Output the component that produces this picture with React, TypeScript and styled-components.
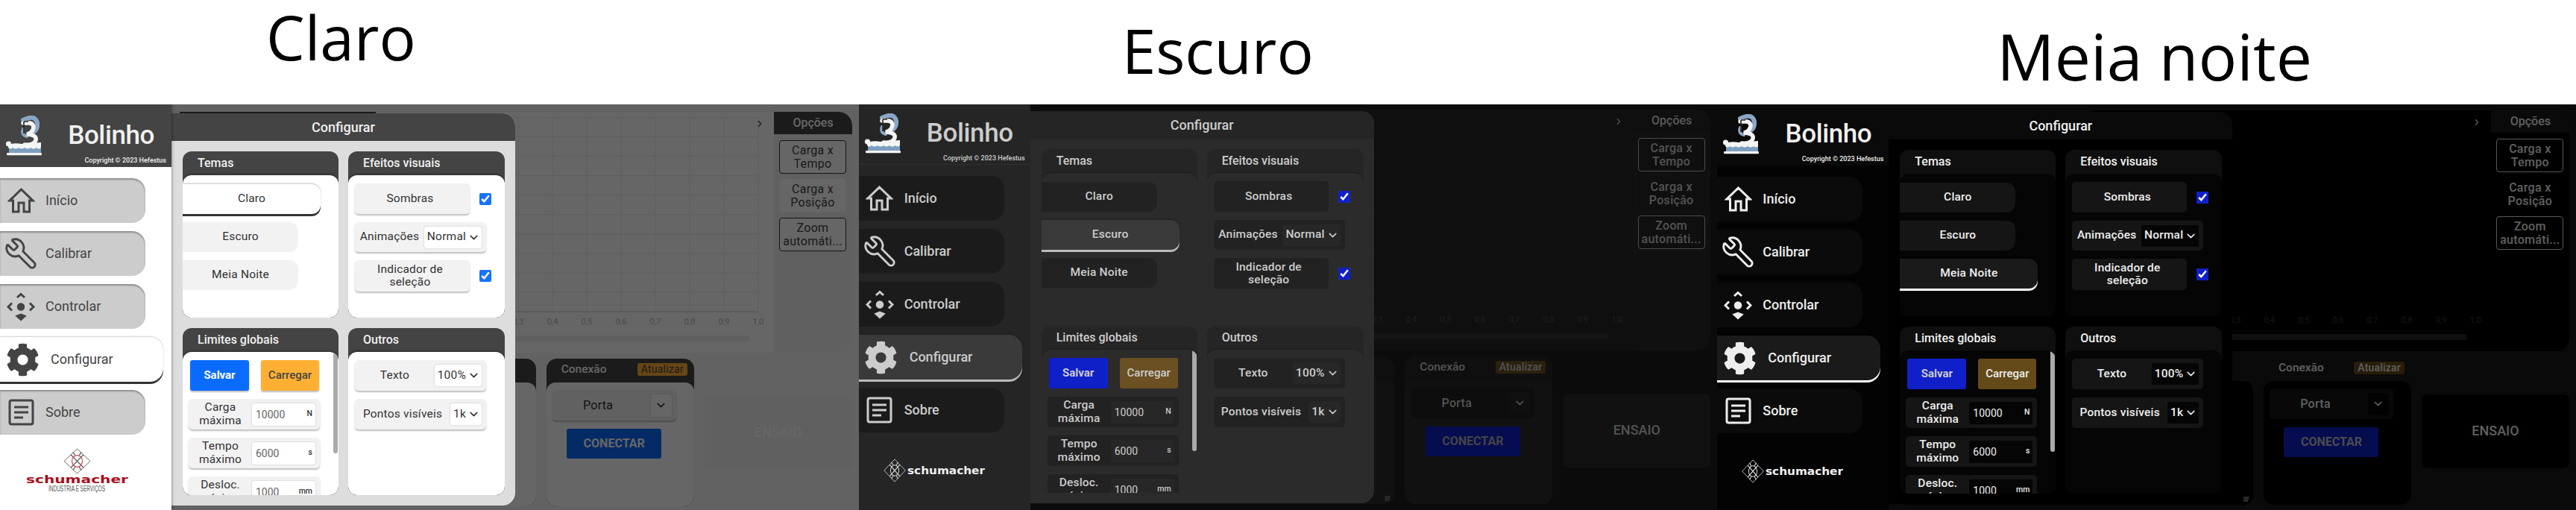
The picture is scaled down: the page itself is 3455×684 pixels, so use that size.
import React from "react";
import styled, { createGlobalStyle, ThemeProvider } from "styled-components";
import { Wrench, ChevronDown, ChevronRight } from "lucide-react";
import { FaCog } from "react-icons/fa";

const claro = {
  name: "claro", side: "#ffffff", sideEdge: "0 0 4px rgba(0,0,0,.55)", head: "#444444", headText: "#f0f0f0", headLine: "transparent",
  nav: "#cccccc", navText: "#444444", navActive: "#ffffff", line: "#333333", navEdge: "inset 0 2px 2px rgba(0,0,0,.3)",
  modalHead: "#444444", modalText: "#f0f0f0", modalBody: "#dddddd", cardHead: "#444444", cardText: "#f0f0f0", cardBody: "#ffffff",
  bodyEdge: "0 -2px 2px rgba(0,0,0,.25)", row: "#f2f2f2", rowText: "#333333", rowEdge: "0 2px 2px rgba(0,0,0,.25)", field: "#ffffff", fieldEdge: "0 0 2px rgba(0,0,0,.25)",
  value: "#666666", btn: "#f2f2f2", primary: "#0a6cff", primaryText: "#ffffff", secondary: "#ffb033", secondaryText: "#444444", thumb: "#aaaaaa", check: "#1673f5",
  page: "#f4f4f4", chart: "#ffffff", grid: "#ececec", base: "#cfcfcf", axis: "#b8b8b8", track: "#eeeeee", opts: "#f0f0f0", optsHead: "#444444", optsText: "#ffffff",
  optBtn: "#ffffff", optText: "#444444", optLine: "#333333", panelHead: "#444444", panelText: "#ffffff", panelBody: "#ffffff", warn: "#ffb033", warnText: "#444444",
  action: "#0a6cff", actionText: "#ffffff", test: "#f0f0f0", testText: "#ffffff", brand: "#a80f1d", mark: "#555555", ring: "#c43a46", shift: 0, stacked: true, handle: "transparent", weight: 400,
};
const escuro = {
  ...claro, name: "escuro", side: "#252525", sideEdge: "none", head: "#252525", headText: "#cccccc", headLine: "#303030",
  nav: "#1b1b1b", navText: "#cccccc", navActive: "#3a3a3a", line: "#bbbbbb", navEdge: "none",
  modalHead: "#252525", modalText: "#cccccc", modalBody: "#2b2b2b", cardHead: "#252525", cardText: "#cccccc", cardBody: "#2b2b2b",
  bodyEdge: "0 -1px 1px rgba(0,0,0,.2)", row: "#222222", rowText: "#cccccc", rowEdge: "none", field: "#272727", fieldEdge: "none",
  value: "#cccccc", btn: "#222222", primary: "#1020c8", primaryText: "#cccccc", secondary: "#6b5024", secondaryText: "#cccccc", thumb: "#aaaaaa", check: "#1020c8",
  page: "#1c1c1c", chart: "#262626", grid: "#2e2e2e", base: "#2e2e2e", axis: "#4d4d4d", track: "#363636", opts: "#2a2a2a", optsHead: "#262626", optsText: "#dddddd",
  optBtn: "#262626", optText: "#cccccc", optLine: "#bbbbbb", panelHead: "#262626", panelText: "#cccccc", panelBody: "#2b2b2b", warn: "#6b5024", warnText: "#cccccc",
  action: "#1020c8", actionText: "#aaaaaa", test: "#2b2b2b", testText: "#cccccc", brand: "#eeeeee", mark: "#dddddd", ring: "#dddddd", shift: 3, stacked: false, handle: "#666666", weight: 500,
};
const meia = {
  ...escuro, name: "meia", side: "#030303", head: "#0a0a0a", headText: "#f0f0f0", headLine: "transparent",
  nav: "#0b0b0b", navText: "#eeeeee", navActive: "#1a1a1a", line: "#ffffff",
  modalHead: "#0a0a0a", modalText: "#f0f0f0", modalBody: "#000000", cardHead: "#0f0f0f", cardText: "#f0f0f0", cardBody: "#050505",
  bodyEdge: "none", row: "#151515", rowText: "#eeeeee", field: "#050505", value: "#eeeeee", btn: "#151515", secondary: "#644a18", secondaryText: "#eeeeee",
  page: "#1a1a1a", chart: "#000000", grid: "#000000", base: "#000000", axis: "#3d3d3d", track: "#262626", opts: "#000000", optsHead: "#1a1a1a", optsText: "#eeeeee",
  optBtn: "#000000", optText: "#eeeeee", optLine: "#dddddd", panelHead: "#1a1a1a", panelText: "#eeeeee", panelBody: "#000000", warn: "#644a18", warnText: "#eeeeee",
  action: "#1020c8", actionText: "#bbbbbb", test: "#000000", testText: "#eeeeee", brand: "#f0f0f0", mark: "#e8e8e8", ring: "#e8e8e8", shift: 2,
};

type Palette = typeof claro;
const t = (k: keyof Palette) => (p: { theme: any }) => p.theme[k];

const Global = createGlobalStyle`
  html, body { margin: 0; padding: 0; background: #fff; overflow: hidden; }
  * { box-sizing: border-box; }
  #root { width: 3455px; height: 684px; overflow: hidden; font-family: Roboto, "Liberation Sans", sans-serif; }
`;

const Sheet = styled.div`display: grid; grid-template-columns: repeat(3, 1fr); width: 3455px; height: 684px;`;
const Column = styled.section`display: flex; flex-direction: column; min-width: 0;`;
const Caption = styled.div<{ $left: number; $top: number; $size: number }>`
  height: 140px; padding: ${p => p.$top}px 0 0 ${p => p.$left}px;
  font: 400 ${p => p.$size}px/1.2 "Open Sans", sans-serif; color: #000; white-space: nowrap;
`;
const Screen = styled.div`height: 544px; overflow: hidden; background: ${t("page")};`;
const Stage = styled.div`
  position: relative; display: flex; height: 550px; margin-top: ${p => -p.theme.shift}px; background: ${t("page")};
`;
const Sidebar = styled.aside`
  position: relative; z-index: 3; flex: 0 0 230px; background: ${t("side")}; box-shadow: ${t("sideEdge")};
  display: flex; flex-direction: column;
`;
const Header = styled.header`
  flex: 0 0 auto; height: 84px; display: flex; background: ${t("head")}; border-bottom: 1px solid ${t("headLine")}; padding: 15px 7px 0 7px; gap: 0;
`;
const TitleBlock = styled.div`flex: 1; display: flex; flex-direction: column; align-items: flex-end;`;
const AppName = styled.h1`margin: 9px 16px 0 0; font: 500 35px/36px Roboto, sans-serif; letter-spacing: -.4px; color: ${t("headText")};`;
const Copyright = styled.small`margin-top: 9px; font: 500 9px/12px Roboto, sans-serif; color: ${t("headText")}; white-space: nowrap;`;
const NavList = styled.nav`display: flex; flex-direction: column; gap: 11px; padding-top: 15px;`;
const NavItem = styled.a<{ $active?: boolean }>`
  display: flex; align-items: center; height: 60px; width: ${p => (p.$active ? 219 : 195)}px;
  border-radius: 0 18px 18px 0; color: ${t("navText")}; font: ${t("weight")} 18px/1 Roboto, sans-serif;
  background: ${p => (p.$active ? p.theme.navActive : p.theme.nav)};
  box-shadow: ${p => (p.$active ? `0 3px 0 ${p.theme.line}, 0 -1px 2px rgba(0,0,0,.2)` : p.theme.navEdge)};
`;
const NavIcon = styled.span<{ $active?: boolean }>`
  flex: 0 0 ${p => (p.$active ? 68 : 61)}px; display: flex; justify-content: center; padding-right: ${p => (p.$active ? 8 : 5)}px;
  svg { display: block; }
`;
const BrandBox = styled.div<{ $stacked: boolean }>`
  display: flex; flex-direction: ${p => (p.$stacked ? "column" : "row")}; align-items: center;
  padding: ${p => (p.$stacked ? "18px 24px 0 0" : "35px 0 0 33px")}; gap: ${p => (p.$stacked ? 1 : 2)}px;
  color: ${t("mark")};
  svg { display: block; }
`;

const Main = styled.main`flex: 1; min-width: 0; display: flex; flex-direction: column; gap: 8px; padding: 10px 9px 0 11px;`;
const ChartPanel = styled.div`
  flex: 0 0 323px; display: flex; overflow: hidden; background: ${t("chart")}; border-radius: 0 18px 18px 0;
`;
const ChartArea = styled.div`position: relative; flex: 1; display: flex; flex-direction: column;`;
const ChartTab = styled.span`position: absolute; left: 0; top: 0; width: 263px; height: 30px; background: ${t("optsHead")}; border-radius: 0 0 6px 0;`;
const ChartSvg = styled.svg`display: block; width: 797px; height: 300px;`;
const Expand = styled.span`position: absolute; left: 771px; top: 9px; color: ${t("navText")}; display: flex;`;
const ScrollTrack = styled.div`height: 8px; width: 765px; border-radius: 0 4px 4px 0; background: ${t("track")};`;
const Options = styled.div`flex: 0 0 105px; background: ${t("opts")}; display: flex; flex-direction: column;`;
const OptionsHead = styled.div`
  height: 30px; display: flex; align-items: center; justify-content: center; background: ${t("optsHead")}; color: ${t("optsText")};
  font: 500 16px/1 Roboto, sans-serif; border-radius: 0 18px 0 0;
`;
const OptionsList = styled.div`display: flex; flex-direction: column; gap: 7px; padding: 8px 8px 0 7px;`;
const OptionButton = styled.button<{ $on?: boolean }>`
  height: 45px; padding: 0; background: ${t("optBtn")}; color: ${t("optText")}; font: ${t("weight")} 16px/17.5px Roboto, sans-serif; letter-spacing: .3px;
  border: ${p => (p.$on ? `1.5px solid ${p.theme.optLine}` : "none")}; border-radius: 4px;
`;
const BottomRow = styled.div`flex: 0 0 198px; display: flex; gap: 14px; align-items: stretch;`;
const PanelCard = styled.div<{ $grow?: boolean }>`
  position: relative; flex: ${p => (p.$grow ? "1" : "0 0 198px")}; display: flex; flex-direction: column; overflow: hidden;
  border-radius: 14px; background: ${t("panelHead")};
`;
const PanelHead = styled.div`
  height: 32px; flex: none; display: flex; align-items: center; justify-content: space-between; padding: 0 9px 3px 20px;
  color: ${t("panelText")}; font: 500 15.5px/1 Roboto, sans-serif;
`;
const RefreshTag = styled.span`
  padding: 0 5px; height: 17px; background: ${t("warn")}; color: ${t("warnText")}; border-radius: 3px; font: ${t("weight")} 14px/17px Roboto, sans-serif; letter-spacing: .2px;
`;
const PanelBody = styled.div`flex: 1; display: flex; flex-direction: column; align-items: center; gap: 11px; padding: 10px 16px 0 0; background: ${t("panelBody")}; border-radius: 12px;`;
const PortRow = styled.div`
  flex: none; width: 166px; height: 41px; display: flex; align-items: center; background: ${t("row")}; color: ${t("rowText")}; border-radius: 5px;
  font: ${t("weight")} 16px/1 Roboto, sans-serif; padding-right: 6px; box-shadow: ${t("rowEdge")};
`;
const PortLabel = styled.span`flex: 1; text-align: center; padding-right: 9px; letter-spacing: .3px;`;
const PortPick = styled.span`width: 28px; height: 30px; display: flex; align-items: center; justify-content: center; background: ${t("field")}; box-shadow: ${t("fieldEdge")}; border-radius: 3px;`;
const ConnectButton = styled.button`
  flex: none; width: 127px; height: 40px; border: none; border-radius: 3px; background: ${t("action")}; color: ${t("actionText")}; font: 700 16px/1 Roboto, sans-serif;
`;
const TestSide = styled.div`flex: 0 0 198px; display: flex; align-items: center;`;
const TestBox = styled.div`
  width: 198px; height: 99px; display: flex; align-items: center; justify-content: center; background: ${t("test")}; color: ${t("testText")};
  border-radius: 8px; font: 500 18px/1 Roboto, sans-serif;
`;
const Handle = styled.span`
  position: absolute; right: 5px; bottom: 4px; width: 8px; height: 7px; background: ${t("handle")}; clip-path: polygon(0 0, 100% 0, 70% 100%, 0 100%);
`;

const Backdrop = styled.div`position: absolute; inset: 0 0 0 230px; z-index: 1; background: rgba(0,0,0,.6);`;
const Modal = styled.div`
  position: absolute; z-index: 2; left: 230px; top: 12px; width: 461px; height: 526px; display: flex; flex-direction: column; overflow: hidden;
  background: ${t("modalBody")}; border-radius: 0 17px 17px 0;
`;
const ModalHead = styled.div`
  flex: 0 0 37px; display: flex; align-items: center; justify-content: center; background: ${t("modalHead")}; color: ${t("modalText")};
  font: 500 18px/1 Roboto, sans-serif;
`;
const ModalGrid = styled.div`
  flex: 1; display: grid; grid-template-columns: 209px 210px; grid-template-rows: 223px 224px; gap: 14px 13px; padding: 14px 14px 0 15px;
`;
const Card = styled.div`
  position: relative; display: flex; flex-direction: column; overflow: hidden; background: ${t("cardHead")}; border-radius: 12px;
`;
const CardHead = styled.h2`
  flex: 0 0 32px; margin: 0; padding: 0 0 1px 20px; display: flex; align-items: center; color: ${t("cardText")}; font: 500 16px/1 Roboto, sans-serif;
`;
const CardBody = styled.div<{ $pad?: string }>`
  flex: 1; min-height: 0; overflow: hidden; position: relative; display: flex; flex-direction: column; align-items: flex-start; gap: 11px;
  padding: ${p => p.$pad || "11px 9px"}; background: ${t("cardBody")}; border-radius: 12px; box-shadow: ${t("bodyEdge")};
`;
const ThemeButton = styled.button<{ $active?: boolean }>`
  flex: none; height: 40px; width: ${p => (p.$active ? 185 : 155)}px; border: none; padding: 0; border-radius: 0 12px 12px 0;
  background: ${p => (p.$active ? p.theme.navActive : p.theme.btn)}; color: ${t("rowText")}; font: ${t("weight")} 15.5px/1 Roboto, sans-serif; letter-spacing: .2px;
  box-shadow: ${p => (p.$active ? `0 3px 0 ${p.theme.line}, 0 -1px 2px rgba(0,0,0,.25)` : "none")};
`;
const ToggleLine = styled.div`display: flex; align-items: center; gap: 13px; flex: none;`;
const RowBox = styled.div<{ $w?: number; $h?: number }>`
  flex: none; width: ${p => p.$w || 176}px; height: ${p => p.$h || 41}px; display: flex; align-items: center; background: ${t("row")}; color: ${t("rowText")};
  border-radius: 5px; box-shadow: ${t("rowEdge")}; font: ${t("weight")} 15.5px/17.5px Roboto, sans-serif; letter-spacing: .2px; padding-right: 6px;
`;
const RowLabel = styled.span<{ $basis?: number }>`
  flex: ${p => (p.$basis ? `0 0 ${p.$basis}px` : "1")}; text-align: center; white-space: pre-line; padding: 0;
`;
const Pick = styled.span`
  flex: none; height: 29px; display: flex; align-items: center; gap: 2px; padding: 0 2px 0 4px; background: ${t("field")}; box-shadow: ${t("fieldEdge")}; border-radius: 3px;
  color: ${t("rowText")}; white-space: nowrap;
`;
const Check = styled.input`width: 16px; height: 16px; margin: 0; accent-color: ${t("check")}; flex: none;`;
const ActionRow = styled.div`display: flex; gap: 16px; padding-left: 2px; flex: none;`;
const ActionButton = styled.button<{ $kind: "save" | "load" }>`
  width: ${p => (p.$kind === "save" ? 79 : 78)}px; height: 41px; border: none; border-radius: 3px; padding: 0;
  background: ${p => (p.$kind === "save" ? p.theme.primary : p.theme.secondary)};
  color: ${p => (p.$kind === "save" ? p.theme.primaryText : p.theme.secondaryText)};
  font: ${p => (p.$kind === "save" ? 700 : 500)} 15px/1 Roboto, sans-serif; box-shadow: ${t("rowEdge")};
`;
const Field = styled.span`
  flex: none; width: 85px; height: 30px; display: flex; align-items: center; justify-content: space-between; padding: 0 4px 0 5px;
  background: ${t("field")}; box-shadow: ${t("fieldEdge")}; border-radius: 3px; color: ${t("value")}; font: 400 14px/1 Roboto, sans-serif; letter-spacing: 0;
`;
const Unit = styled.b`font: 500 10.5px/1 Roboto, sans-serif; color: ${t("rowText")};`;
const Thumb = styled.span`position: absolute; right: 1px; top: 0; width: 6px; height: 136px; background: ${t("thumb")}; border-radius: 3px;`;

const Logo = () => (
  <svg width="51" height="54" viewBox="0 0 51 54" fill="none">
    <path d="M24 6 Q40 -2 43 10 Q44 22 31 25" stroke="#8aa6c6" strokeWidth="6" strokeLinecap="round" />
    <path d="M24 18 Q21 26 29 28" stroke="#8aa6c6" strokeWidth="4" strokeLinecap="round" />
    <path d="M24 10 H33 Q40 12 37 19 Q35 24 29 25 Q43 26 41 33 Q39 40 26 39" stroke="#f4f4f4" strokeWidth="5.5" strokeLinecap="round" />
    <path d="M25 8 V24 M25 8 H31" stroke="#222" strokeWidth="1.6" />
    <rect x="5" y="41" width="43" height="9" fill="#7d9fbf" />
    <path d="M4 39 Q12 36 22 38 L48 36 V43 Q45 46 42 43 Q38 46 34 43 Q30 46 26 43 Q22 46 18 43 Q14 46 10 43 Q7 46 4 43 Z" fill="#f4f4f4" />
    <circle cx="4.5" cy="38" r="3.6" fill="#f4f4f4" />
    <rect x="2" y="50" width="47" height="3.2" rx="1" fill="#f4f4f4" />
  </svg>
);
const HouseIcon = () => (
  <svg width="37" height="34" viewBox="0 0 37 34" fill="none" stroke="currentColor" strokeWidth="3" strokeLinejoin="miter">
    <path d="M18.5 2 L34 17 H29.5 V32 H22 V20 H15 V32 H7.5 V17 H3 Z" />
  </svg>
);
const MoveIcon = () => (
  <svg width="38" height="39" viewBox="0 0 38 39" fill="currentColor" stroke="currentColor" strokeWidth="3" strokeLinejoin="miter">
    <circle cx="19" cy="19.5" r="4.5" strokeWidth="1.5" />
    <path d="M14 7 L19 2.5 L24 7" fill="none" /><path d="M14 32 L19 36.5 L24 32 L19 30 Z" />
    <path d="M7 14.5 L2 19.5 L7 24.5" fill="none" /><path d="M31 14.5 L36 19.5 L31 24.5" fill="none" />
  </svg>
);
const PageIcon = () => (
  <svg width="35" height="36" viewBox="0 0 35 36" fill="none" stroke="currentColor">
    <rect x="2" y="2" width="31" height="32" rx="2.5" strokeWidth="3" />
    <path d="M8 11 H27 M8 18 H27 M8 25 H20" strokeWidth="3.2" />
  </svg>
);
const Mark = ({ w, h, ring }: { w: number; h: number; ring: string }) => (
  <svg width={w} height={h} viewBox="0 0 40 33" preserveAspectRatio="none" fill="none" stroke="currentColor" strokeWidth=".9">
    <path d="M20 1 L39 16.5 L20 32 L1 16.5 Z" />
    <path d="M11 8.5 L29 24.5 M29 8.5 L11 24.5 M14 5 L17 9 M26 5 L23 9 M14 28 L17 24 M26 28 L23 24" strokeWidth="1.3" />
    <ellipse cx="20" cy="16.5" rx="7.5" ry="7.5" stroke={ring} strokeWidth="1.2" />
  </svg>
);
const Wordmark = ({ w, color }: { w: number; color: string }) => (
  <svg width={w} height="12" viewBox={`0 0 ${w} 12`}>
    <text x="0" y="10.5" textLength={w} lengthAdjust="spacingAndGlyphs" fontFamily="DejaVu Sans" fontWeight="700" fontSize="13.5" fill={color}>schumacher</text>
  </svg>
);
const Tagline = () => (
  <svg width="76" height="11" viewBox="0 0 76 11">
    <text x="0" y="9" textLength="76" lengthAdjust="spacingAndGlyphs" fontFamily="Liberation Sans" fontSize="10" fill="#555555">INDÚSTRIA E SERVIÇOS</text>
  </svg>
);

const Brand = ({ stacked, color, ring }: { stacked: boolean; color: string; ring: string }) => (
  <BrandBox $stacked={stacked}>
    <Mark w={stacked ? 37 : 30} h={stacked ? 35 : 32} ring={ring} />
    <Wordmark w={stacked ? 137 : 104} color={color} />
    {stacked && <Tagline />}
  </BrandBox>
);

const TICKS = Array.from({ length: 11 }, (_, i) => i);
const ROWS = Array.from({ length: 10 }, (_, i) => 7.5 + i * 26.05);
const Chart = ({ grid, base, axis }: { grid: string; base: string; axis: string }) => (
  <ChartSvg viewBox="0 0 797 300">
    {ROWS.map(y => <line key={y} x1="316" x2="776" y1={y} y2={y} stroke={grid} />)}
    {TICKS.map(i => <line key={i} x1={316 + i * 46} x2={316 + i * 46} y1="7.5" y2="268" stroke={grid} />)}
    <line x1="316" x2="776" y1="268" y2="268" stroke={base} />
    {TICKS.map(i => (
      <text key={i} x={316 + i * 46} y="285" textAnchor="middle" fontSize="11.5" fontFamily="Roboto, sans-serif" fill={axis}>
        {(i / 10).toFixed(1).replace(".", ",")}
      </text>
    ))}
  </ChartSvg>
);

const Arrow = () => <ChevronDown size={17} strokeWidth={2.2} />;

const Mock = ({ palette }: { palette: Palette }) => {
  const items: [string, React.ReactNode][] = [
    ["Início", <HouseIcon />],
    ["Calibrar", <Wrench size={46} strokeWidth={1.5} style={{ transform: "scaleX(-1)" }} />],
    ["Controlar", <MoveIcon />],
    ["Configurar", <FaCog size={45} />],
    ["Sobre", <PageIcon />],
  ];
  const activeTheme = palette.name;
  return (
    <ThemeProvider theme={palette}>
      <Screen>
        <Stage>
          <Sidebar>
            <Header>
              <Logo />
              <TitleBlock>
                <AppName>Bolinho</AppName>
                <Copyright>Copyright © 2023 Hefestus</Copyright>
              </TitleBlock>
            </Header>
            <NavList>
              {items.map(([label, icon]) => (
                <NavItem key={label} $active={label === "Configurar"}>
                  <NavIcon $active={label === "Configurar"}>{icon}</NavIcon>
                  {label}
                </NavItem>
              ))}
            </NavList>
            <Brand stacked={palette.stacked} color={palette.brand} ring={palette.ring} />
          </Sidebar>

          <Main>
            <ChartPanel>
              <ChartArea>
                <Chart grid={palette.grid} base={palette.base} axis={palette.axis} />
                <ChartTab />
                <Expand><ChevronRight size={14} strokeWidth={2} /></Expand>
                <ScrollTrack />
              </ChartArea>
              <Options>
                <OptionsHead>Opções</OptionsHead>
                <OptionsList>
                  <OptionButton $on>Carga x<br />Tempo</OptionButton>
                  <OptionButton>Carga x<br />Posição</OptionButton>
                  <OptionButton $on>Zoom<br />automáti...</OptionButton>
                </OptionsList>
              </Options>
            </ChartPanel>
            <BottomRow>
              <PanelCard $grow>
                <PanelHead />
                <PanelBody />
                <Handle />
              </PanelCard>
              <PanelCard>
                <PanelHead>Conexão<RefreshTag>Atualizar</RefreshTag></PanelHead>
                <PanelBody>
                  <PortRow><PortLabel>Porta</PortLabel><PortPick><Arrow /></PortPick></PortRow>
                  <ConnectButton>CONECTAR</ConnectButton>
                </PanelBody>
              </PanelCard>
              <TestSide><TestBox>ENSAIO</TestBox></TestSide>
            </BottomRow>
          </Main>

          <Backdrop />

          <Modal>
            <ModalHead>Configurar</ModalHead>
            <ModalGrid>
              <Card>
                <CardHead>Temas</CardHead>
                <CardBody $pad="12px 0">
                  <ThemeButton $active={activeTheme === "claro"}>Claro</ThemeButton>
                  <ThemeButton $active={activeTheme === "escuro"}>Escuro</ThemeButton>
                  <ThemeButton $active={activeTheme === "meia"}>Meia Noite</ThemeButton>
                </CardBody>
              </Card>
              <Card>
                <CardHead>Efeitos visuais</CardHead>
                <CardBody>
                  <ToggleLine>
                    <RowBox $w={154}><RowLabel>Sombras</RowLabel></RowBox>
                    <Check type="checkbox" checked readOnly />
                  </ToggleLine>
                  <RowBox $h={40}>
                    <RowLabel>Animações</RowLabel>
                    <Pick>Normal<Arrow /></Pick>
                  </RowBox>
                  <ToggleLine>
                    <RowBox $w={154} $h={42}><RowLabel>{"Indicador de\nseleção"}</RowLabel></RowBox>
                    <Check type="checkbox" checked readOnly />
                  </ToggleLine>
                </CardBody>
              </Card>
              <Card>
                <CardHead>Limites globais</CardHead>
                <CardBody $pad="11px 8px">
                  <ActionRow>
                    <ActionButton $kind="save">Salvar</ActionButton>
                    <ActionButton $kind="load">Carregar</ActionButton>
                  </ActionRow>
                  <RowBox>
                    <RowLabel $basis={85}>{"Carga\nmáxima"}</RowLabel>
                    <Field>10000<Unit>N</Unit></Field>
                  </RowBox>
                  <RowBox>
                    <RowLabel $basis={85}>{"Tempo\nmáximo"}</RowLabel>
                    <Field>6000<Unit>s</Unit></Field>
                  </RowBox>
                  <RowBox>
                    <RowLabel $basis={85}>{"Desloc.\nmáximo"}</RowLabel>
                    <Field>1000<Unit>mm</Unit></Field>
                  </RowBox>
                  <Thumb />
                </CardBody>
              </Card>
              <Card>
                <CardHead>Outros</CardHead>
                <CardBody $pad="11px 9px">
                  <RowBox>
                    <RowLabel>Texto</RowLabel>
                    <Pick>100%<Arrow /></Pick>
                  </RowBox>
                  <RowBox>
                    <RowLabel>Pontos visíveis</RowLabel>
                    <Pick>1k<Arrow /></Pick>
                  </RowBox>
                </CardBody>
              </Card>
            </ModalGrid>
          </Modal>
        </Stage>
      </Screen>
    </ThemeProvider>
  );
};

export default function App() {
  return (
    <>
      <Global />
      <Sheet>
        <Column>
          <Caption $left={357} $top={0} $size={82}>Claro</Caption>
          <Mock palette={claro} />
        </Column>
        <Column>
          <Caption $left={353} $top={18} $size={82}>Escuro</Caption>
          <Mock palette={escuro} />
        </Column>
        <Column>
          <Caption $left={375} $top={23} $size={86}>Meia noite</Caption>
          <Mock palette={meia} />
        </Column>
      </Sheet>
    </>
  );
}
